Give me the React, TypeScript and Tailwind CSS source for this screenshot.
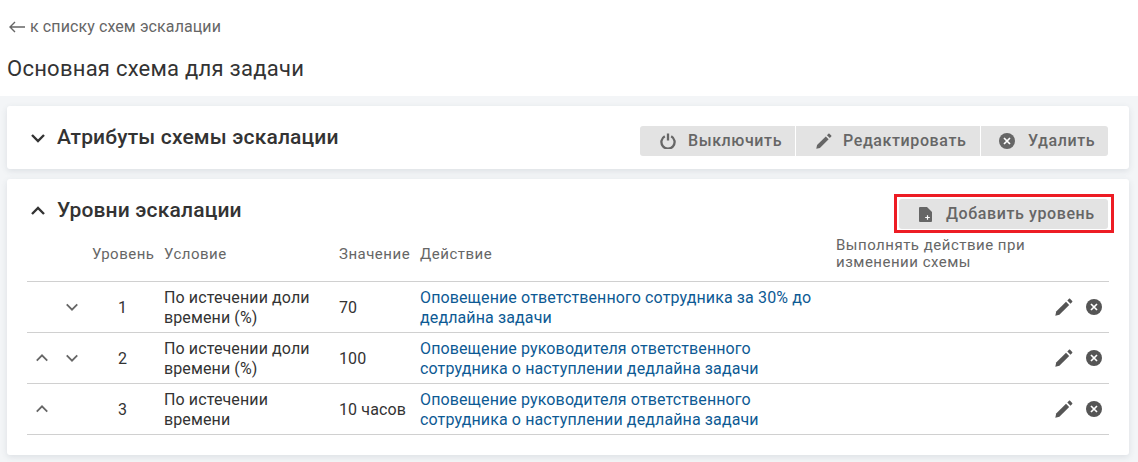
const rows = [
  {
    up: false,
    down: true,
    level: "1",
    condition: "По истечении доли времени (%)",
    value: "70",
    action: "Оповещение ответственного сотрудника за 30% до дедлайна задачи",
  },
  {
    up: true,
    down: true,
    level: "2",
    condition: "По истечении доли времени (%)",
    value: "100",
    action: "Оповещение руководителя ответственного сотрудника о наступлении дедлайна задачи",
  },
  {
    up: true,
    down: false,
    level: "3",
    condition: "По истечении времени",
    value: "10 часов",
    action: "Оповещение руководителя ответственного сотрудника о наступлении дедлайна задачи",
  },
];

const grid = "grid grid-cols-[60px_77px_175px_81px_415px_1fr]";

function Chevron({ up, className, width }: { up?: boolean; className: string; width: number }) {
  return (
    <svg viewBox="0 0 16 16" className={className} fill="none" stroke="currentColor" strokeWidth={width}>
      <path d={up ? "M2 11l6-6 6 6" : "M2 5l6 6 6-6"} />
    </svg>
  );
}

function Pencil({ className }: { className: string }) {
  return (
    <svg viewBox="0 0 18 18" className={className} fill="currentColor">
      <path d="M0.3 17.7L1.2 13.6 11 3.8 14.2 7 4.4 16.8z" />
      <path d="M12.3 2.5L14 0.8C14.3 0.5 14.8 0.5 15.1 0.8L17.2 2.9C17.5 3.2 17.5 3.7 17.2 4L15.5 5.7z" />
    </svg>
  );
}

function CancelIcon({ className }: { className: string }) {
  return (
    <svg viewBox="0 0 16 16" className={className}>
      <circle cx="8" cy="8" r="8" fill="currentColor" />
      <path d="M5 5l6 6M11 5l-6 6" stroke="white" strokeWidth="1.7" />
    </svg>
  );
}

function PowerIcon({ className }: { className: string }) {
  return (
    <svg viewBox="0 0 16 16" className={className} fill="none" stroke="currentColor" strokeWidth="2.3">
      <path d="M4.8 3.2a6.6 6.6 0 1 0 6.4 0" />
      <path d="M8 0.5v7" />
    </svg>
  );
}

function NoteAddIcon({ className }: { className: string }) {
  return (
    <svg viewBox="0 0 13 15" className={className}>
      <path d="M1 0H8L13 5V14a1 1 0 0 1-1 1H1a1 1 0 0 1-1-1V1a1 1 0 0 1 1-1z" fill="currentColor" />
      <path d="M8.5 8.2v4.6M6.2 10.5h4.6" stroke="white" strokeWidth="1.2" />
    </svg>
  );
}

export default function App() {
  return (
    <div className="h-[462px] w-[1138px] overflow-hidden bg-[#f3f5f7] font-['Roboto',sans-serif] text-[#333333]">
      <div className="h-[96px] bg-white pl-[7px]">
        <div className="flex h-[53px] items-center text-[16px] tracking-[0.1px] text-[#666666]">
          <svg viewBox="0 0 16 12" className="mr-[5px] ml-[2px] h-[12px] w-[16px]" fill="none" stroke="currentColor" strokeWidth="1.4">
            <path d="M6 1L1 6l5 5M1 6h15" />
          </svg>
          к списку схем эскалации
        </div>
        <h1 className="pt-[1px] text-[22px] leading-[30px] tracking-[0.25px]">Основная схема для задачи</h1>
      </div>

      <div className="flex flex-col gap-[10px] pt-[10px] pr-[9px] pl-[7px]">
        <section className="flex h-[63px] items-center justify-between rounded-[3px] bg-white pr-[21px] pl-[20px] shadow-[0_2px_6px_rgba(60,70,90,0.12)]">
          <div className="flex items-center gap-[11px]">
            <Chevron className="ml-[3px] h-[16px] w-[16px]" width={2.4} />
            <h2 className="text-[21px] font-medium tracking-[0.17px]">Атрибуты схемы эскалации</h2>
          </div>
          <div className="mt-[7px] flex gap-px text-[16px] font-medium tracking-[0.6px] text-[#666666]">
            <button className="flex h-[30px] w-[155px] items-center gap-[12px] rounded-l-[3px] bg-[#e3e3e3] pl-[20px]">
              <PowerIcon className="h-[16px] w-[16px]" />
              Выключить
            </button>
            <button className="flex h-[30px] w-[184px] items-center gap-[11px] bg-[#e3e3e3] pl-[20px]">
              <Pencil className="h-[16px] w-[16px]" />
              Редактировать
            </button>
            <button className="flex h-[30px] w-[127px] items-center gap-[13px] rounded-r-[3px] bg-[#e3e3e3] pl-[18px]">
              <CancelIcon className="h-[16px] w-[16px]" />
              Удалить
            </button>
          </div>
        </section>

        <section className="h-[276px] rounded-[3px] bg-white px-[20px] shadow-[0_2px_6px_rgba(60,70,90,0.12)]">
          <div className="flex h-[53px] items-start justify-between">
            <div className="flex items-center gap-[11px] pt-[16px]">
              <Chevron up className="ml-[3px] h-[16px] w-[16px]" width={2.4} />
              <h2 className="text-[21px] font-medium tracking-[0.17px]">Уровни эскалации</h2>
            </div>
            <div className="mt-[15px] -mr-[5px] border-[3px] border-[#ed1c24] pt-[2px] pr-[3px] pb-[1px] pl-[2px]">
              <button className="flex h-[30px] w-[209px] items-center gap-[14px] rounded-[3px] bg-[#e3e3e3] pl-[20px] text-[16px] font-medium tracking-[0.6px] text-[#666666]">
                <NoteAddIcon className="h-[15px] w-[13px]" />
                Добавить уровень
              </button>
            </div>
          </div>

          <div className={`${grid} h-[50px] items-center border-b border-[#d0d0d0] pb-[6px] text-[15px] leading-[18px] tracking-[0.5px] text-[#666666]`}>
            <div />
            <div className="pl-[5px]">Уровень</div>
            <div>Условие</div>
            <div>Значение</div>
            <div>Действие</div>
            <div className="self-start pt-[5px] pl-[1px] leading-[17px]">
              Выполнять действие при
              <br />
              изменении схемы
            </div>
          </div>

          {rows.map((row) => (
            <div
              key={row.level}
              className={`${grid} h-[51px] items-center border-b border-[#d0d0d0] text-[16px] leading-[20px] tracking-[0.12px]`}
            >
              <div className="flex items-center gap-[16px] pl-[8px] text-[#666666]">
                {row.up ? <Chevron up className="h-[14px] w-[14px]" width={2.1} /> : <div className="w-[14px]" />}
                {row.down && <Chevron className="h-[14px] w-[14px]" width={2.1} />}
              </div>
              <div className="pt-[2px] pr-[6px] text-center">{row.level}</div>
              <div className="w-[160px] pt-[2px]">{row.condition}</div>
              <div className="pt-[2px]">{row.value}</div>
              <a className="w-[400px] pt-[2px] text-[#0d5a94]">{row.action}</a>
              <div className="flex items-center justify-end gap-[13px] pr-[7px] text-[#555555]">
                <Pencil className="h-[18px] w-[18px]" />
                <CancelIcon className="h-[16px] w-[16px]" />
              </div>
            </div>
          ))}
        </section>
      </div>
    </div>
  );
}
